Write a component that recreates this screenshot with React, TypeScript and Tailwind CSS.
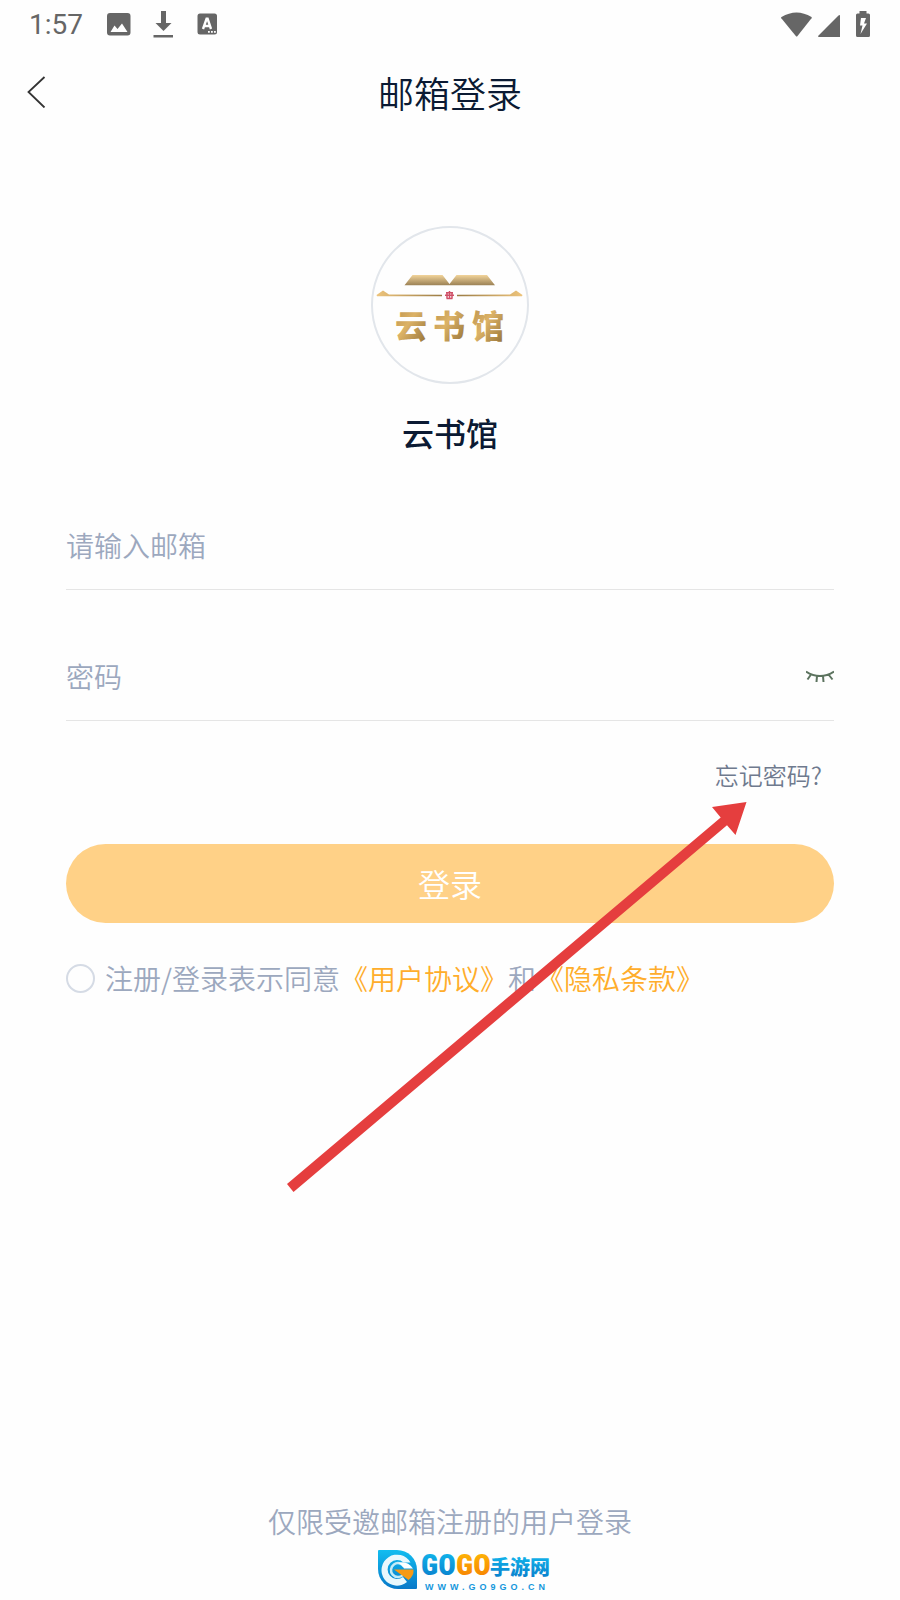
import { useState } from "react";

function StatusBar() {
	return (
		<div className="flex h-[48px] items-center justify-between pl-[29px] pr-[29px] text-[#666666]">
			<div className="flex items-center">
				<span className="w-[77px] pt-[2px] font-['Roboto',sans-serif] text-[28px] font-normal leading-[32px]">
					1:57
				</span>
				<svg className="h-[28px] w-[114px]" viewBox="106 10 114 28" fill="currentColor">
					<path
						fillRule="evenodd"
						d="M110 13h17.500a3 3 0 0 1 3 3v16.500a3 3 0 0 1-3 3H110a3 3 0 0 1-3-3V16a3 3 0 0 1 3-3zM110.500 32h17l-5.500-8.500-4.500 5.500-3-3.500z"
					/>
					<path d="M161 11h5v12h5.500l-8 8-8-8h5.500zM153.500 35H173v2.500h-19.500z" />
					<path d="M200 13.500h14.500a2.500 2.500 0 0 1 2.500 2.500v16a2.500 2.500 0 0 1-2.500 2.500H200a2.500 2.500 0 0 1-2.500-2.500V16a2.500 2.500 0 0 1 2.500-2.500z" />
					<path
						d="M203 29l3.600-10.200h1L211 29M204.500 26h5.500"
						fill="none"
						stroke="#fff"
						strokeWidth="2.400"
					/>
					<path d="M208 31h1.800v1.800H208zM211 31h1.800v1.800H211zM214 31h1.800v1.800H214z" fill="#fff" />
				</svg>
			</div>
			<svg className="h-[28px] w-[90px]" viewBox="781 9 90 28" fill="currentColor">
				<path d="M781.500 16q15-9 30 0q.5.5 0 1.200L797.500 35q-.8 1-1.700 0L781.300 17.200q-.5-.7.2-1.200z" />
				<path d="M840 14.500V36h-21q-1.500 0-.7-1.200L838.500 14.500q1.500-1.200 1.500 0z" />
				<path
					fillRule="evenodd"
					d="M859.500 10h7v2.500h2q1.500 0 1.500 1.500v20.500q0 1.500-1.500 1.500h-11q-1.500 0-1.500-1.500V14q0-1.500 1.500-1.500h2zM861 17l-1 7.500h2.500L860.500 33l6.500-10.500h-3L866 17z"
				/>
			</svg>
		</div>
	);
}

function BookLogo() {
	return (
		<svg
			className="h-[158px] w-[158px] rounded-full border-2 border-[#e2e6eb]"
			viewBox="373 228 154 154"
			role="img"
			aria-label="云书馆"
		>
			<defs>
				<linearGradient id="page" x1="0" y1="0" x2="0" y2="1">
					<stop offset="0" stopColor="#f2d49a" />
					<stop offset="1" stopColor="#9b8155" />
				</linearGradient>
				<linearGradient id="ruleLeft" x1="0" x2="1">
					<stop offset="0" stopColor="#edc47c" />
					<stop offset="1" stopColor="#9b7c45" />
				</linearGradient>
				<linearGradient id="ruleRight" x1="0" x2="1">
					<stop offset="0" stopColor="#9b7c45" />
					<stop offset="1" stopColor="#edc47c" />
				</linearGradient>
				<linearGradient id="ink" x1="0" y1="0" x2="1" y2="1">
					<stop offset="0" stopColor="#b68d4a" />
					<stop offset=".45" stopColor="#dcb266" />
					<stop offset="1" stopColor="#8f6d34" />
				</linearGradient>
			</defs>
			<path d="M412.500 275H442.500L449.500 284 456.500 275H487L495 285.300H404.500z" fill="url(#page)" />
			<path d="M376.500 295l6.500-4.500 6 4 53 .2v1.600h-65z" fill="url(#ruleLeft)" />
			<path d="M457 294.700l53-.2 6-4 6.500 4.500-.5 1.300h-65z" fill="url(#ruleRight)" />
			<path
				d="M449.500 291v8M446 292.700h7M445 295.200h9M446.500 298.600h6M447 292.500v6M452 292.500v6"
				stroke="#cf5067"
				strokeWidth="1.500"
				fill="none"
			/>
			<g
				fontFamily="'Noto Sans CJK SC', sans-serif"
				fontSize="32"
				fontWeight="900"
				textAnchor="middle"
				fill="url(#ink)"
			>
				<text x="411" y="338">云</text>
				<text x="449" y="338">书</text>
				<text x="488" y="338">馆</text>
			</g>
		</svg>
	);
}

function SiteLogo() {
	return (
		<svg className="h-[42px] w-[174px]" viewBox="377 1549 174 42" role="img" aria-label="GOGO手游网">
			<defs>
				<linearGradient id="blue" x1="0" y1="0" x2="0" y2="1">
					<stop offset="0" stopColor="#12bdf0" />
					<stop offset="1" stopColor="#0878c8" />
				</linearGradient>
				<linearGradient id="orange" x1="0" y1="0" x2="0" y2="1">
					<stop offset="0" stopColor="#ffbd08" />
					<stop offset="1" stopColor="#f57a00" />
				</linearGradient>
			</defs>
			<path
				d="M379 1550h18a20 20 0 0 1 20 20v18q0 1-1 1h-18a20 20 0 0 1-20-20v-18q0-1 1-1z"
				fill="url(#blue)"
			/>
			<path
				d="M410.500 1562.500A15.500 15.500 0 1 0 407 1582L403 1577A9.500 9.500 0 1 1 403.500 1562.500z"
				fill="#e9f8fd"
			/>
			<path
				d="M404 1566.500a7 7 0 1 0-1 8.500"
				fill="none"
				stroke="#c4ebf8"
				strokeWidth="2.500"
			/>
			<path d="M398 1563q9-3 15 5.500h-9q-3-5-6-5.500z" fill="#fff" />
			<path d="M394 1569.500h19.500q.5 6.500-5 10.500z" fill="#f79a16" />
			<g fontFamily="'Roboto Condensed', 'Liberation Sans Narrow', 'Liberation Sans', sans-serif" fontWeight="900" fontSize="29">
				<text x="421" y="1575" fill="url(#blue)">GO</text>
				<text x="456" y="1575" fill="url(#orange)">GO</text>
			</g>
			<text
				x="490"
				y="1575"
				fill="url(#blue)"
				fontFamily="'Noto Sans CJK SC', sans-serif"
				fontWeight="900"
				fontSize="20"
			>
				手游网
			</text>
			<text
				className="tracking-[4px]"
				x="425"
				y="1590"
				fill="#1497dc"
				fontFamily="'Liberation Sans', sans-serif"
				fontSize="9"
				fontWeight="700"
			>
				WWW.GO9GO.CN
			</text>
		</svg>
	);
}

function Arrow() {
	return (
		<svg
			className="pointer-events-none absolute left-[286px] top-[801px] h-[392px] w-[461px]"
			viewBox="286 801 461 392"
			aria-hidden="true"
		>
			<path
				d="M746.500 802L735.500 835 727 825.300 293.500 1192 287 1184 720.700 817.500 712 807z"
				fill="#e53e3e"
			/>
		</svg>
	);
}

export default function App() {
	const [email, setEmail] = useState("");
	const [password, setPassword] = useState("");
	const [visible, setVisible] = useState(false);
	const [agreed, setAgreed] = useState(false);

	return (
		<div className="relative flex min-h-screen flex-col bg-[#fefefe] font-['Noto_Sans_CJK_SC',sans-serif] font-[350]">
			<StatusBar />

			<header className="grid h-[88px] grid-cols-[1fr_auto_1fr] items-center px-[26px]">
				<button type="button" aria-label="返回" className="w-[20px]">
					<svg
						className="h-[32px] w-[20px]"
						viewBox="26 76 20 32"
						fill="none"
						stroke="#333"
						strokeWidth="1.800"
					>
						<path d="M44.500 77L28.500 92l16 15.500" />
					</svg>
				</button>
				<h1 className="text-[36px] font-[350] leading-[52px] text-[#0b1a33]">邮箱登录</h1>
			</header>

			<main className="flex flex-col px-[66px] pt-[90px]">
				<div className="flex flex-col items-center gap-[24px]">
					<BookLogo />
					<h2 className="text-[32px] font-medium leading-[48px] text-[#0b1a33]">云书馆</h2>
				</div>

				<form onSubmit={(e) => e.preventDefault()}>
					<div className="mt-[46px] flex h-[88px] items-center border-b border-[#e5e5e5] pb-[2px]">
						<input
							type="email"
							aria-label="邮箱"
							placeholder="请输入邮箱"
							value={email}
							onChange={(e) => setEmail(e.target.value)}
							className="h-[44px] w-full text-[28px] leading-[44px] outline-none placeholder:text-[#9ca8be]"
						/>
					</div>
					<div className="mt-[43px] flex h-[88px] items-center border-b border-[#e5e5e5] pb-[2px]">
						<input
							type={visible ? "text" : "password"}
							aria-label="密码"
							placeholder="密码"
							value={password}
							onChange={(e) => setPassword(e.target.value)}
							className="h-[44px] w-full text-[28px] leading-[44px] outline-none placeholder:text-[#9ca8be]"
						/>
						<button type="button" aria-label="显示密码" onClick={() => setVisible(!visible)}>
							<svg
								className="h-[14px] w-[28px]"
								viewBox="806 669 28 14"
								fill="none"
								stroke="#5c735f"
								strokeWidth="2"
							>
								<path d="M806 671.500q14 9 28 0M811 674.500l-3.500 5M817 676l-.5 6M823 676l.5 6M828.500 674.500l4 5" />
							</svg>
						</button>
					</div>

					<div className="mt-[36px] flex justify-end pr-[12px]">
						<a href="#forgot" className="text-[24px] leading-[36px] text-[#6f7a8e]">
							忘记密码?
						</a>
					</div>

					<button
						type="submit"
						className="mt-[51px] h-[79px] w-full rounded-full bg-[#ffd187] pb-[2px] text-[32px] leading-[48px] text-white"
					>
						登录
					</button>

					<div className="mt-[34px] flex items-center gap-[10px] text-[28px] leading-[42px] text-[#9ca8be]">
						<input
							id="agree"
							type="checkbox"
							checked={agreed}
							onChange={(e) => setAgreed(e.target.checked)}
							className="h-[29px] w-[29px] appearance-none rounded-full border-2 border-[#d5dbe5] checked:border-[#ffad2b] checked:bg-[#ffad2b]"
						/>
						<p>
							<label htmlFor="agree">注册/登录表示同意</label>
							<a href="#terms" className="text-[#ffad2b]">《用户协议》</a>
							和
							<a href="#privacy" className="text-[#ffad2b]">《隐私条款》</a>
						</p>
					</div>
				</form>
			</main>

			<footer className="mt-auto flex flex-col items-center gap-[7px] pb-[9px]">
				<p className="text-[28px] leading-[42px] text-[#9ca8be]">仅限受邀邮箱注册的用户登录</p>
				<div className="pl-[28px]">
					<SiteLogo />
				</div>
			</footer>

			<Arrow />
		</div>
	);
}
